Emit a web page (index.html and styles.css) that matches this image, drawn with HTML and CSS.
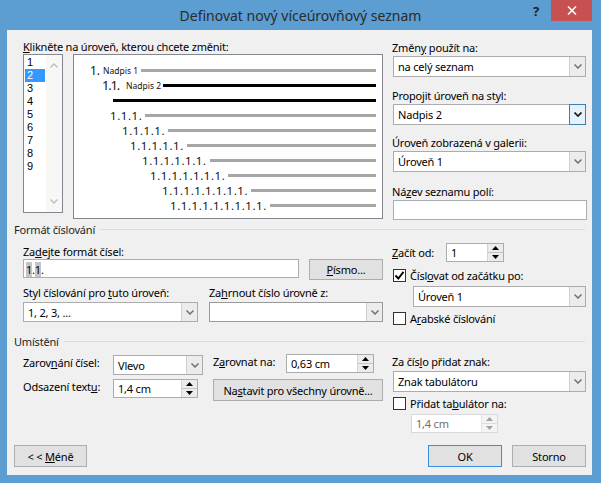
FILE: index.html
```html
<!DOCTYPE html>
<html lang="cs">
<head>
<meta charset="utf-8">
<title>Definovat nový víceúrovňový seznam</title>
<link rel="stylesheet" href="styles.css">
</head>
<body>
<div class="window">
  <div class="titlebar">
    <div class="title">Definovat nový víceúrovňový seznam</div>
    <div class="controls">
      <div class="help">?</div>
      <div class="close"><svg width="10" height="9" viewBox="0 0 10 9"><path d="M1 0.5 L9 8.5 M9 0.5 L1 8.5" stroke="#fff" stroke-width="1.6" fill="none"/></svg></div>
    </div>
  </div>
  <div class="client">
    <div class="top">
      <div class="top-left">
        <div class="lbl lbl-first"><u>K</u>likněte na úroveň, kterou chcete změnit:</div>
        <div class="top-row">
          <div class="levels">
            <div class="level-items">
              <div class="item">1</div>
              <div class="item sel">2</div>
              <div class="item">3</div>
              <div class="item">4</div>
              <div class="item">5</div>
              <div class="item">6</div>
              <div class="item">7</div>
              <div class="item">8</div>
              <div class="item">9</div>
            </div>
            <div class="vscroll">
              <svg width="8" height="5" viewBox="0 0 8 5"><path d="M0.5 4.5 L4 1 L7.5 4.5" stroke="#bdbdbd" stroke-width="1.4" fill="none"/></svg>
              <svg width="8" height="5" viewBox="0 0 8 5"><path d="M0.5 0.5 L4 4 L7.5 0.5" stroke="#bdbdbd" stroke-width="1.4" fill="none"/></svg>
            </div>
          </div>
          <div class="preview">
            <div class="prow l1"><span class="num n1">1.</span><span class="cap c1">Nadpis 1</span><span class="bar"></span></div>
            <div class="prow l2"><span class="num n2">1.1.</span><span class="cap c2">Nadpis 2</span><span class="bar dark b2"></span></div>
            <div class="prow l3"><span class="bar dark b3"></span></div>
            <div class="prow l4"><span class="num">1.1.1.</span><span class="bar"></span></div>
            <div class="prow l5"><span class="num">1.1.1.1.</span><span class="bar"></span></div>
            <div class="prow l6"><span class="num">1.1.1.1.1.</span><span class="bar"></span></div>
            <div class="prow l7"><span class="num">1.1.1.1.1.1.</span><span class="bar"></span></div>
            <div class="prow l8"><span class="num">1.1.1.1.1.1.1.</span><span class="bar"></span></div>
            <div class="prow l9"><span class="num">1.1.1.1.1.1.1.1.</span><span class="bar"></span></div>
            <div class="prow l10"><span class="num">1.1.1.1.1.1.1.1.1.</span><span class="bar"></span></div>
          </div>
        </div>
      </div>
      <div class="col-right">
        <div class="lbl rl1">Změn<u>y</u> použít na:</div>
        <div class="combo cw"><span class="val">na celý seznam</span><span class="dd"><svg width="8" height="5" viewBox="0 0 8 5"><path d="M0.5 0.5 L4 4 L7.5 0.5" stroke="#707070" stroke-width="1.5" fill="none"/></svg></span></div>
        <div class="lbl rl2">Propo<u>j</u>it úroveň na styl:</div>
        <div class="combo cw focus"><span class="val">Nadpis 2</span><span class="dd"><svg width="8" height="5" viewBox="0 0 8 5"><path d="M0.5 0.5 L4 4 L7.5 0.5" stroke="#1a1a1a" stroke-width="1.7" fill="none"/></svg></span></div>
        <div class="lbl rl3">Úroveň zobrazená v <u>g</u>alerii:</div>
        <div class="combo cw"><span class="val">Úroveň 1</span><span class="dd"><svg width="8" height="5" viewBox="0 0 8 5"><path d="M0.5 0.5 L4 4 L7.5 0.5" stroke="#707070" stroke-width="1.5" fill="none"/></svg></span></div>
        <div class="lbl rl4">Ná<u>z</u>ev seznamu polí:</div>
        <div class="textbox tw"></div>
      </div>
    </div>

    <div class="group-head gh1"><span>Formát číslování</span><span class="rule"></span></div>

    <div class="mid">
      <div class="mid-left">
        <div class="lbl ml1">Za<u>d</u>ejte formát čísel:</div>
        <div class="row1">
          <div class="textbox fmt"><span class="shade">1</span>.<span class="shade">1</span>.</div>
          <div class="btn pismo"><span><u>P</u>ísmo...</span></div>
        </div>
        <div class="grid2">
          <div class="lbl">Styl číslování pro <u>t</u>uto úroveň:</div>
          <div class="lbl">Za<u>h</u>rnout číslo úrovně z:</div>
          <div class="combo h20"><span class="val">1, 2, 3, ...</span><span class="dd"><svg width="8" height="5" viewBox="0 0 8 5"><path d="M0.5 0.5 L4 4 L7.5 0.5" stroke="#707070" stroke-width="1.5" fill="none"/></svg></span></div>
          <div class="combo h20 dark-border"><span class="val"></span><span class="dd"><svg width="8" height="5" viewBox="0 0 8 5"><path d="M0.5 0.5 L4 4 L7.5 0.5" stroke="#707070" stroke-width="1.5" fill="none"/></svg></span></div>
        </div>
      </div>
      <div class="mid-right">
        <div class="start-row">
          <span class="lbl start-lbl"><u>Z</u>ačít od:</span>
          <div class="spin start-spin"><span class="val">1</span><span class="arrows"><span class="arr"><svg width="7" height="4" viewBox="0 0 7 4"><path d="M0 4 L3.5 0 L7 4Z" fill="#000"/></svg></span><span class="arr"><svg width="7" height="4" viewBox="0 0 7 4"><path d="M0 0 L3.5 4 L7 0Z" fill="#000"/></svg></span></span></div>
        </div>
        <div class="cb-row cbr1">
          <span class="cb"><svg width="11" height="11" viewBox="0 0 11 11"><path d="M1.5 5.5 L4.3 8.5 L9.5 1.8" stroke="#000" stroke-width="1.9" fill="none"/></svg></span>
          <span class="lbl">Čísl<u>o</u>vat od začátku po:</span>
        </div>
        <div class="combo lvl-combo"><span class="val">Úroveň 1</span><span class="dd"><svg width="8" height="5" viewBox="0 0 8 5"><path d="M0.5 0.5 L4 4 L7.5 0.5" stroke="#707070" stroke-width="1.5" fill="none"/></svg></span></div>
        <div class="cb-row cbr2">
          <span class="cb"></span>
          <span class="lbl">A<u>r</u>abské číslování</span>
        </div>
      </div>
    </div>

    <div class="group-head gh2"><span>Umístění</span><span class="rule"></span></div>

    <div class="bot">
      <div class="bot-left">
        <div class="sub-a">
          <div class="pair pa1">
            <span class="lbl pl">Zarov<u>n</u>ání čísel:</span>
            <div class="combo h20 vlevo"><span class="val">Vlevo</span><span class="dd"><svg width="8" height="5" viewBox="0 0 8 5"><path d="M0.5 0.5 L4 4 L7.5 0.5" stroke="#707070" stroke-width="1.5" fill="none"/></svg></span></div>
          </div>
          <div class="pair pa2">
            <span class="lbl pl">Odsazení text<u>u</u>:</span>
            <div class="spin odsaz"><span class="val">1,4 cm</span><span class="arrows"><span class="arr"><svg width="7" height="4" viewBox="0 0 7 4"><path d="M0 4 L3.5 0 L7 4Z" fill="#000"/></svg></span><span class="arr"><svg width="7" height="4" viewBox="0 0 7 4"><path d="M0 0 L3.5 4 L7 0Z" fill="#000"/></svg></span></span></div>
          </div>
        </div>
        <div class="sub-b">
          <div class="pair pb1">
            <span class="lbl pbl">Z<u>a</u>rovnat na:</span>
            <div class="spin zarov"><span class="val">0,63 cm</span><span class="arrows"><span class="arr"><svg width="7" height="4" viewBox="0 0 7 4"><path d="M0 4 L3.5 0 L7 4Z" fill="#000"/></svg></span><span class="arr"><svg width="7" height="4" viewBox="0 0 7 4"><path d="M0 0 L3.5 4 L7 0Z" fill="#000"/></svg></span></span></div>
          </div>
          <div class="btn nastavit"><span>Na<u>s</u>tavit pro všechny úrovně...</span></div>
        </div>
      </div>
      <div class="bot-right">
        <div class="lbl br1">Za čís<u>l</u>o přidat znak:</div>
        <div class="combo cw br-combo"><span class="val">Znak tabulátoru</span><span class="dd"><svg width="8" height="5" viewBox="0 0 8 5"><path d="M0.5 0.5 L4 4 L7.5 0.5" stroke="#707070" stroke-width="1.5" fill="none"/></svg></span></div>
        <div class="cb-row cbr3">
          <span class="cb"></span>
          <span class="lbl">Přidat ta<u>b</u>ulátor na:</span>
        </div>
        <div class="spin disabled tabspin"><span class="val">1,4 cm</span><span class="arrows"><span class="arr"><svg width="7" height="4" viewBox="0 0 7 4"><path d="M0 4 L3.5 0 L7 4Z" fill="#a0a0a0"/></svg></span><span class="arr"><svg width="7" height="4" viewBox="0 0 7 4"><path d="M0 0 L3.5 4 L7 0Z" fill="#a0a0a0"/></svg></span></span></div>
      </div>
    </div>

    <div class="buttons">
      <div class="btn mene"><span>&lt; &lt; <u>M</u>éně</span></div>
      <div class="btn-group">
        <div class="btn ok"><span>OK</span></div>
        <div class="btn storno"><span>Storno</span></div>
      </div>
    </div>
  </div>
</div>
</body>
</html>
```

FILE: styles.css
```css
* { box-sizing: border-box; }
html, body { margin: 0; padding: 0; }
body {
  width: 601px;
  height: 483px;
  overflow: hidden;
  background: #5c9dd2;
  font-family: "Noto Sans", "Liberation Sans", sans-serif;
  font-size: 11px;
  letter-spacing: -0.2px;
  color: #000;
}
u { text-decoration: underline; text-underline-offset: 1px; }

.window { width: 601px; height: 483px; display: flex; flex-direction: column; }

/* title bar */
.titlebar {
  height: 30px;
  display: grid;
  grid-template-columns: 1fr auto 1fr;
}
.title {
  grid-column: 2;
  font-size: 14px;
  letter-spacing: 0;
  line-height: 32px;
  color: #2b2b2b;
  white-space: nowrap;
}
.controls {
  grid-column: 3;
  display: flex;
  justify-content: flex-end;
  align-items: flex-start;
  padding-right: 9px;
}
.help {
  width: 18px;
  height: 21px;
  line-height: 23px;
  text-align: center;
  font-weight: bold;
  font-size: 13px;
  color: #222;
  margin-right: 6px;
}
.close {
  width: 41px;
  height: 21px;
  background: #c75050;
  display: flex;
  align-items: center;
  justify-content: center;
}

/* client */
.client {
  margin: 0 9px 0 7px;
  height: 445px;
  background: #f0f0f0;
}
.lbl { line-height: 16px; white-space: nowrap; }

/* top */
.top { display: flex; padding-top: 10px; }
.top-left { width: 376px; padding-left: 16px; }
.lbl-first { line-height: 14px; }
.top-row { display: flex; align-items: flex-start; }

.levels {
  width: 40px;
  height: 159px;
  border: 1px solid #828790;
  background: #fff;
  display: flex;
}
.level-items { width: 22px; padding: 1px; }
.item {
  height: 13px;
  line-height: 13px;
  padding-left: 2px;
  font-family: "Liberation Sans", Arial, sans-serif;
  font-size: 11px;
  letter-spacing: 0;
}
.item.sel { background: #3399ff; color: #fff; }
.vscroll {
  width: 16px;
  background: #f7f7f7;
  display: flex;
  flex-direction: column;
  justify-content: space-between;
  align-items: center;
  padding: 8px 0 8px;
}

.preview {
  width: 310px;
  height: 165px;
  margin-left: 10px;
  border: 1px solid #828790;
  background: #fff;
  padding: 8px 6px 0 0;
}
.prow { height: 15px; display: flex; align-items: center; }
.num {
  font-size: 11.5px;
  letter-spacing: 0.55px;
  line-height: 15px;
  white-space: nowrap;
  color: #111;
}
.n1 { font-size: 12px; letter-spacing: 0; }
.n2 { font-size: 13px; letter-spacing: -1.2px; }
.cap { font-size: 8.5px; letter-spacing: 0; white-space: nowrap; color: #111; }
.c1 { margin-left: 3px; }
.c2 { margin-left: 7px; }
.bar { flex: 1; height: 3px; background: #a6a6a6; margin-left: 3px; }
.bar.dark { background: #000; }
.b2 { margin-left: 2px; }
.b3 { margin-left: 0; }
.l1 { padding-left: 16px; }
.l2 { padding-left: 28px; }
.l3 { padding-left: 39px; }
.l4 { padding-left: 36px; }
.l5 { padding-left: 48px; }
.l6 { padding-left: 56px; }
.l7 { padding-left: 68px; }
.l8 { padding-left: 76px; }
.l9 { padding-left: 88px; }
.l10 { padding-left: 96px; }

.col-right { width: 194px; margin-left: 9px; }
.rl2 { margin-top: 11px; }
.rl3 { margin-top: 10px; }
.rl4 { margin-top: 12px; }

/* widgets */
.combo {
  display: flex;
  height: 21px;
  background: #fff;
  border: 1px solid #acacac;
}
.combo.h20 { height: 20px; }
.combo.dark-border { border-color: #9a9a9a; }
.combo .val {
  flex: 1;
  display: flex;
  align-items: center;
  padding-left: 4px;
  white-space: nowrap;
  overflow: hidden;
}
.combo .dd {
  width: 16px;
  background: #ececec;
  border-left: 1px solid #cfcfcf;
  display: flex;
  align-items: center;
  justify-content: center;
}
.combo.focus .dd {
  background: #e5f1fb;
  border: 1px solid #3c7fb1;
  margin: -1px -1px -1px 0;
  width: 17px;
}
.cw { width: 193px; margin-left: 1px; }

.textbox {
  height: 20px;
  background: #fff;
  border: 1px solid #abadb3;
}
.tw { width: 194px; margin-left: 1px; }

.spin {
  display: flex;
  height: 19px;
  background: #fff;
  border: 1px solid #acacac;
}
.spin .val {
  flex: 1;
  display: flex;
  align-items: center;
  padding-left: 4px;
  white-space: nowrap;
}
.spin .arrows {
  width: 16px;
  display: flex;
  flex-direction: column;
  border-left: 1px solid #d4d4d4;
  background: #ececec;
}
.spin .arr {
  flex: 1;
  display: flex;
  align-items: center;
  justify-content: center;
}
.spin .arr + .arr { border-top: 1px solid #c4c4c4; }
.spin.disabled { border-color: #d9d9d9; color: #6d6d6d; }
.spin.disabled .arrows { background: #f4f4f4; border-left-color: #e3e3e3; }
.spin.disabled .arr + .arr { border-top-color: #dedede; }

.btn {
  display: flex;
  align-items: center;
  justify-content: center;
  height: 22px;
  background: #e1e1e1;
  border: 1px solid #adadad;
  white-space: nowrap;
}

.cb-row { display: flex; align-items: center; height: 13px; }
.cb {
  width: 13px;
  height: 13px;
  margin-left: 1px;
  margin-right: 4px;
  border: 1px solid #333;
  background: #fff;
  display: flex;
  align-items: center;
  justify-content: center;
}

/* group headings */
.group-head {
  display: flex;
  align-items: center;
  height: 16px;
  line-height: 16px;
  padding-left: 7px;
  padding-right: 7px;
  color: #1e1e1e;
}
.group-head .rule {
  flex: 1;
  height: 1px;
  background: #dcdcdc;
  margin-left: 5px;
  margin-bottom: 2px;
}
.gh1 { margin-top: 2px; }
.gh2 { margin-top: 9px; }

/* middle */
.mid { display: flex; }
.mid-left { width: 376px; padding-left: 16px; }
.ml1 { margin-top: 6px; line-height: 15px; }
.row1 { display: flex; align-items: flex-start; }
.fmt {
  width: 276px;
  height: 19px;
  padding: 1px 0 0 2px;
  line-height: 15px;
  display: flex;
  align-items: center;
}
.shade { background: #c4c4c4; display: inline-block; line-height: 15px; }
.pismo { width: 74px; height: 21px; margin-left: 10px; }
.grid2 {
  margin-top: 5px;
  display: grid;
  grid-template-columns: 175px 174px;
  column-gap: 11px;
  row-gap: 1px;
}

.mid-right { width: 194px; margin-left: 9px; }
.start-row { display: flex; align-items: center; margin-top: 5px; }
.start-lbl { width: 54px; }
.start-spin { width: 58px; }
.cbr1 { margin-top: 7px; }
.lvl-combo { width: 173px; margin-left: 21px; margin-top: 4px; }
.cbr2 { margin-top: 5px; }

/* bottom */
.bot { display: flex; }
.bot-left { width: 376px; padding-left: 16px; display: flex; }
.sub-a { width: 190px; }
.sub-b { width: 170px; }
.pair { display: flex; align-items: flex-start; }
.pa1 { margin-top: 5px; }
.pa2 { margin-top: 4px; }
.pl { width: 90px; }
.vlevo { width: 90px; }
.odsaz { width: 85px; }
.pb1 { margin-top: 4px; }
.pbl { width: 73px; }
.zarov { width: 88px; }
.nastavit { width: 170px; margin-top: 6px; }

.bot-right { width: 194px; margin-left: 9px; }
.br1 { margin-top: 4px; }
.br-combo { margin-top: 1px; }
.cbr3 { margin-top: 5px; }
.tabspin { width: 87px; margin-left: 19px; margin-top: 4px; }

.buttons {
  display: flex;
  margin-top: 12px;
  padding: 0 6px 0 7px;
}
.mene { width: 73px; }
.btn-group { display: flex; margin-left: auto; gap: 10px; }
.ok { width: 74px; border-color: #3c8ee0; }
.storno { width: 74px; }
```
